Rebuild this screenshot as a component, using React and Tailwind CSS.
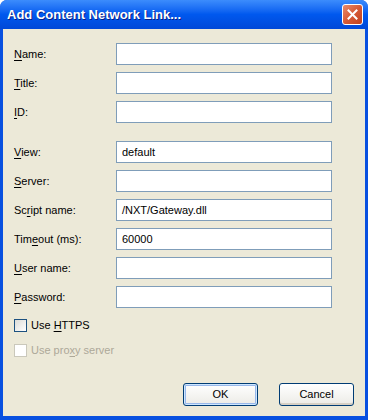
import React from "react";

const fields = [
  { pre: "", key: "N", post: "ame:", value: "" },
  { pre: "", key: "T", post: "itle:", value: "" },
  { pre: "", key: "I", post: "D:", value: "" },
  { pre: "", key: "V", post: "iew:", value: "default", gap: true },
  { pre: "", key: "S", post: "erver:", value: "" },
  { pre: "Sc", key: "r", post: "ipt name:", value: "/NXT/Gateway.dll" },
  { pre: "Tim", key: "e", post: "out (ms):", value: "60000" },
  { pre: "", key: "U", post: "ser name:", value: "" },
  { pre: "", key: "P", post: "assword:", value: "" },
];

function Label({ pre, k, post, disabled }) {
  return (
    <span className={disabled ? "text-[#aca899]" : "text-black"}>
      {pre}
      <span className="underline underline-offset-[2px]">{k}</span>
      {post}
    </span>
  );
}

function Checkbox({ pre, k, post, disabled }) {
  return (
    <div className="flex items-center h-[13px] gap-[4px]">
      <div
        className={
          disabled
            ? "w-[13px] h-[13px] border border-[#cac8bb] bg-white"
            : "w-[13px] h-[13px] border border-[#1c5180] bg-gradient-to-br from-[#dcdcd7] to-white"
        }
      />
      <Label pre={pre} k={k} post={post} disabled={disabled} />
    </div>
  );
}

function Button({ children, primary }) {
  return (
    <button
      className={`w-[75px] h-[23px] rounded-[3px] border border-[#003c74] bg-gradient-to-b from-white to-[#ecebe6] text-black text-[11px] ${
        primary ? "shadow-[inset_0_0_0_1px_#cee7ff,inset_0_0_0_2px_#98b8ea]" : "shadow-[inset_0_-2px_0_#d6d0c5]"
      }`}
    >
      {children}
    </button>
  );
}

export default function App() {
  return (
    <div
      className="w-[368px] h-[420px] flex flex-col rounded-t-[7px] bg-[#0850e0] overflow-hidden"
      style={{ fontFamily: '"Liberation Sans", Arial, sans-serif' }}
    >
      {/* title bar */}
      <div className="h-[29px] flex items-center justify-between pl-[7px] pr-[5px] bg-gradient-to-b from-[#3c8cfc] via-[#0058ee] to-[#0048d8] shrink-0">
        <span className="text-white font-bold text-[13px] [text-shadow:1px_1px_0_#0a1e84]">
          Add Content Network Link...
        </span>
        <div className="w-[21px] h-[21px] rounded-[3px] border border-white bg-gradient-to-br from-[#e88a6a] via-[#d65a36] to-[#c0401c] flex items-center justify-center">
          <svg width="11" height="11" viewBox="0 0 11 11">
            <path d="M1.5 1.5 L9.5 9.5 M9.5 1.5 L1.5 9.5" stroke="white" strokeWidth="2" strokeLinecap="square" />
          </svg>
        </div>
      </div>

      {/* body */}
      <div className="flex-1 mx-[3px] mb-[4px] bg-[#ece9d8] flex flex-col pt-[14px] pl-[10px] pr-[11px] text-[11px]">
        <div className="flex flex-col gap-[7px]">
          {fields.map((f, i) => (
            <div key={i} className={`flex items-center h-[22px] ${f.gap ? "mt-[11px]" : ""}`}>
              <div className="w-[103px] pl-[1px]">
                <Label pre={f.pre} k={f.key} post={f.post} />
              </div>
              <div className="w-[216px] h-[22px] border border-[#7f9db9] bg-white flex items-center px-[5px] text-black">
                {f.value}
              </div>
            </div>
          ))}
        </div>

        <div className="flex flex-col gap-[12px] mt-[11px] pl-[1px]">
          <Checkbox pre="Use " k="H" post="TTPS" />
          <Checkbox pre="Use pro" k="x" post="y server" disabled />
        </div>

        <div className="flex justify-end gap-[21px] mt-[26px]">
          <Button primary>OK</Button>
          <Button>Cancel</Button>
        </div>
      </div>
    </div>
  );
}
